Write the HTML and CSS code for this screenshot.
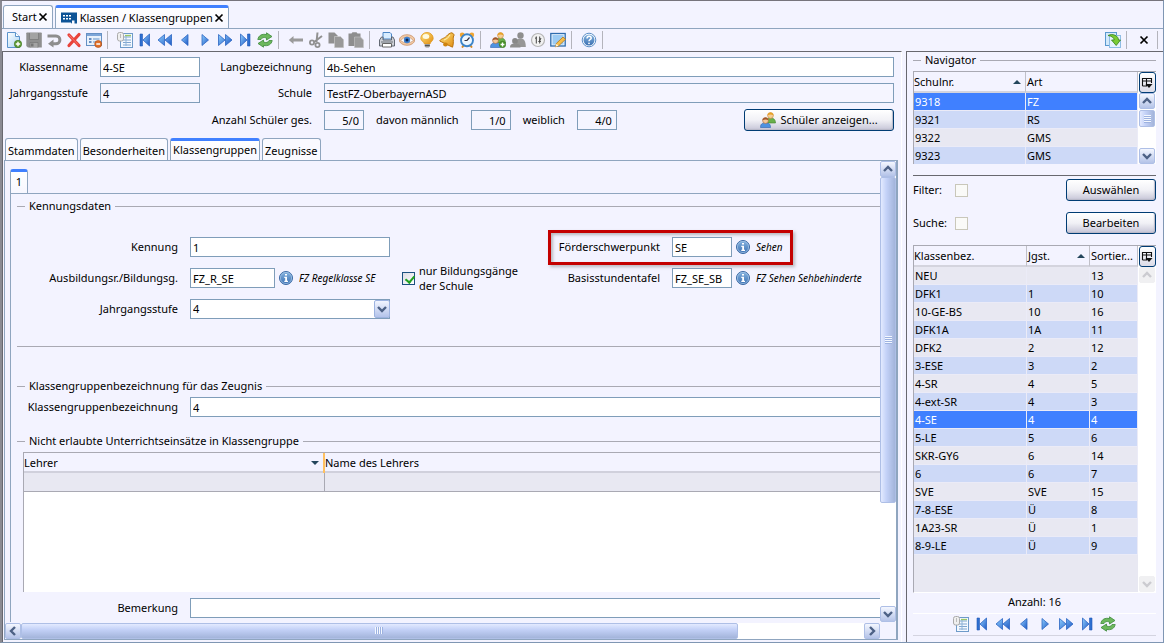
FILE: index.html
```html
<!DOCTYPE html>
<html lang="de">
<head>
<meta charset="utf-8">
<title>Klassen / Klassengruppen</title>
<link rel="stylesheet" href="styles.css">
</head>
<body>
<svg class="defs" aria-hidden="true">
  <defs>
    <linearGradient id="gBlue" x1="0" y1="0" x2="1" y2="1"><stop offset="0" stop-color="#8fd0ff"/><stop offset="1" stop-color="#1d57c4"/></linearGradient>
    <linearGradient id="gBall" x1="0" y1="0" x2="0" y2="1"><stop offset="0" stop-color="#86b4e0"/><stop offset="1" stop-color="#3b70b2"/></linearGradient>
    <linearGradient id="gPage" x1="0" y1="0" x2="1" y2="1"><stop offset="0" stop-color="#ffffff"/><stop offset="1" stop-color="#a9d3f5"/></linearGradient>
    <linearGradient id="gGold" x1="0" y1="0" x2="1" y2="1"><stop offset="0" stop-color="#ffe680"/><stop offset="1" stop-color="#e08a10"/></linearGradient>
  </defs>
  <symbol id="i-school" viewBox="0 0 16 12"><path d="M0 .5h16V11.500h-2.500V8.500H11v3q-1 0-1-1H0z" fill="#0d5396"/><path d="M2 3h2v1.500H2zM5 3h2v1.500H5zM8 3h2v1.500H8zM2 6h2v1.500H2zM5 6h2v1.500H5zM8 6h2v1.500H8z" fill="#fff"/></symbol>
  <symbol id="i-x" viewBox="0 0 10 10"><path d="M1.500 1.500l7 7M8.500 1.500l-7 7" stroke="#000" stroke-width="1.700" fill="none"/></symbol>
  <symbol id="i-new" viewBox="0 0 16 16"><path d="M1.500.5h8l4 4v11h-12z" fill="url(#gPage)" stroke="#5b93cc"/><path d="M9.500.5v4h4" fill="#fff" stroke="#5b93cc"/><circle cx="12" cy="12" r="3.700" fill="#5f9c35" stroke="#3d7320" stroke-width=".6"/><path d="M12 9.800v4.400M9.800 12h4.400" stroke="#fff" stroke-width="1.400"/></symbol>
  <symbol id="i-save" viewBox="0 0 16 16"><path d="M1 .5h14q.8 0 .8.8v14.200H2L.3 14V1.300Q.3.500 1 .5z" fill="#8f8f8f"/><path d="M3.500 1v6.500h9V1M4 15.500v-5h8v5" fill="#a3a3a3" stroke="#777" stroke-width=".7"/><path d="M5 11.500h2.500v3H5z" fill="#777"/></symbol>
  <symbol id="i-undo" viewBox="0 0 16 16"><path d="M1.500 4h8.500a3.900 3.900 0 010 7.800H6" fill="none" stroke="#8e8e8e" stroke-width="3"/><path d="M7.500 7.500v8L2 11.800z" fill="#8e8e8e"/></symbol>
  <symbol id="i-del" viewBox="0 0 16 16"><path d="M3 3l10 10.500M13 2.500L3 13.500" stroke="#e8433b" stroke-width="3.200" stroke-linecap="round"/><path d="M3 3l9 9.500" stroke="#ff8279" stroke-width=".8"/></symbol>
  <symbol id="i-form" viewBox="0 0 16 16"><rect x=".5" y="1.500" width="15" height="12" fill="#e8f1fb" stroke="#6590c4"/><path d="M1 2h14v2H1z" fill="#7da6d8"/><path d="M3 7h2.500M3 10h2.500" stroke="#3b6db0" stroke-width="1.300"/><path d="M7 7h6.500M7 10h4" stroke="#8fb2da" stroke-width="1.300"/><circle cx="12.200" cy="12" r="3.500" fill="#e0702b" stroke="#b0480c" stroke-width=".6"/><path d="M10.300 12h3.800" stroke="#fff" stroke-width="1.500"/></symbol>
  <symbol id="i-list" viewBox="0 0 16 16"><rect x="3.500" y="1.500" width="12" height="14" fill="#f4f9ff" stroke="#6e9bc9"/><path d="M6 5h8M6 8h8M6 10.500h8M6 13h8" stroke="#7fa5cf"/><path d="M9 3.500v10.500" stroke="#8eb4d8"/><path d="M8 3.500h6" stroke="#9bc766" stroke-width="1.300"/><rect x=".5" y=".5" width="6" height="8.500" rx="2" fill="#efefef" stroke="#aaa"/><path d="M3.500 2v4" stroke="#bbb"/></symbol>
  <symbol id="i-first" viewBox="0 0 16 16"><path d="M3 2h2.500v12H3z" fill="#2d6fd0" stroke="#2259b5" stroke-width=".6"/><path d="M12.500 2v12L6 8z" fill="url(#gBlue)" stroke="#2b64c2" stroke-width=".8"/></symbol>
  <symbol id="i-rew" viewBox="0 0 16 16"><path d="M7.500 2.500v11L1 8zM14.500 2.500v11L8 8z" fill="url(#gBlue)" stroke="#2b64c2" stroke-width=".8"/></symbol>
  <symbol id="i-prev" viewBox="0 0 16 16"><path d="M11 2.500v11L4.500 8z" fill="url(#gBlue)" stroke="#2b64c2" stroke-width=".8"/></symbol>
  <symbol id="i-next" viewBox="0 0 16 16"><path d="M5 2.500v11L11.500 8z" fill="url(#gBlue)" stroke="#2b64c2" stroke-width=".8"/></symbol>
  <symbol id="i-ff" viewBox="0 0 16 16"><path d="M1.500 2.500v11L8 8zM8.500 2.500v11L15 8z" fill="url(#gBlue)" stroke="#2b64c2" stroke-width=".8"/></symbol>
  <symbol id="i-last" viewBox="0 0 16 16"><path d="M3.500 2v12L10 8z" fill="url(#gBlue)" stroke="#2b64c2" stroke-width=".8"/><path d="M10.500 2H13v12h-2.500z" fill="#2d6fd0" stroke="#2259b5" stroke-width=".6"/></symbol>
  <symbol id="i-refresh" viewBox="0 0 16 16"><path d="M.8 7.500C1.500 3.500 5 1.500 9.500 2.600V.8L15 4.500 9.500 8V6C6.500 5 5 5.500 4 7.500z" fill="#6cb85c" stroke="#3f8a3c" stroke-width=".8"/><path d="M15.200 8.500C14.500 12.500 11 14.500 6.500 13.400v1.800L1 11.500 6.500 8v2c3 1 4.500.5 5.500-1.500z" fill="#6cb85c" stroke="#3f8a3c" stroke-width=".8"/></symbol>
  <symbol id="i-left" viewBox="0 0 16 16"><path d="M.8 8L5.500 4v2.600H15v2.800H5.500V12z" fill="#9a9a9a"/></symbol>
  <symbol id="i-cut" viewBox="0 0 16 16"><path d="M9.500.5L8.500 10M14 4L5.500 10.500" stroke="#919191" stroke-width="2"/><circle cx="4" cy="10.500" r="2.100" fill="none" stroke="#919191" stroke-width="1.800"/><circle cx="9.500" cy="13" r="2.100" fill="none" stroke="#919191" stroke-width="1.800"/></symbol>
  <symbol id="i-copy" viewBox="0 0 16 16"><path d="M.5.500h6l3 3v8h-9z" fill="#909090"/><path d="M6.500 4.500h6l3.200 3.200v8H6.500z" fill="#999" stroke="#d0d0d0" stroke-width=".6"/></symbol>
  <symbol id="i-paste" viewBox="0 0 16 16"><path d="M.5 1.500h3l1-1.300h4l1 1.300h3V14H.5z" fill="#8e8e8e"/><path d="M6.500 5h6l3 3v7.700h-9z" fill="#9c9c9c" stroke="#c8c8c8" stroke-width=".6"/></symbol>
  <symbol id="i-print" viewBox="0 0 16 16"><path d="M4 7V.5h7l1.500 1.500V7z" fill="#d8ecff" stroke="#4d86c6"/><path d="M2.500 5h1.500v3h8.500V5H14l1.500 3v6H.5V8z" fill="#cdd0d6" stroke="#555b66" stroke-width=".9"/><path d="M3.500 11.500h9v3.500h-9z" fill="#fff" stroke="#666"/><path d="M2 10h12" stroke="#6d727b"/></symbol>
  <symbol id="i-eye" viewBox="0 0 16 16"><ellipse cx="8" cy="8" rx="7.700" ry="5.300" fill="#f1c9a5" stroke="#c99066" stroke-width=".8"/><path d="M1.500 8.500Q8 1.500 14.500 8.500 8 13.500 1.500 8.500z" fill="#fff" stroke="#b98a6c" stroke-width=".6"/><circle cx="8" cy="8" r="3.200" fill="#3f81d0"/><circle cx="8" cy="8" r="1.500" fill="#0d2550"/></symbol>
  <symbol id="i-bulb" viewBox="0 0 16 16"><path d="M8 .5a6 6 0 016.200 5.700c0 2.600-2.700 3.500-3.200 5.800H5.500C5 9.700 1.800 8.800 1.800 6.200A6 6 0 018 .5z" fill="url(#gGold)" stroke="#e0981c" stroke-width=".8"/><ellipse cx="7" cy="4.500" rx="3.300" ry="2.500" fill="#fffbe0"/><path d="M5.800 12h5v2.500l-1 1H6.800l-1-1z" fill="#989898"/><path d="M5.800 13.500h5" stroke="#555"/></symbol>
  <symbol id="i-bell" viewBox="0 0 16 16"><path d="M13 .8l2.300 2C13 5.500 15.500 9 13.500 15.200L.8 9C1 7 5.500 6.500 7.500 4.200 9 2.300 11 .800 13 .8z" fill="url(#gGold)" stroke="#b9720c"/><ellipse cx="6.500" cy="12.500" rx="2.400" ry="1.900" fill="#cf830f"/><path d="M5 8Q9 7 11 3" stroke="#fff3b0" fill="none"/></symbol>
  <symbol id="i-clock" viewBox="0 0 16 16"><circle cx="3.200" cy="3" r="2.400" fill="#f1a532"/><circle cx="12.800" cy="3" r="2.400" fill="#f1a532"/><path d="M3 15.500l2-2.500M13 15.500l-2-2.500" stroke="#d98b20" stroke-width="2"/><circle cx="8" cy="8.300" r="6" fill="#eef7ff" stroke="#3d85c9" stroke-width="1.900"/><path d="M10.500 5.500L8 8.500H5.500" fill="none" stroke="#334" stroke-width="1.200"/></symbol>
  <symbol id="i-people" viewBox="0 0 16 16"><path d="M7 11c0-4 1-5 3.500-5S15.500 7 15.500 11z" fill="#69b04b" stroke="#3f7f2b" stroke-width=".6"/><circle cx="10.500" cy="3.500" r="2.900" fill="#f4cd97" stroke="#c48531" stroke-width=".6"/><path d="M7.500 3.500C7.500-.5 13.500-.5 13.500 3.500 12 2 9 2 7.500 3.500z" fill="#e8a126"/><path d="M.5 15.500C.5 12 2 11 5.500 11s5 1 5 4.500z" fill="#4d92e0" stroke="#2c62ad" stroke-width=".6"/><circle cx="5.500" cy="8.500" r="2.900" fill="#f3c89a" stroke="#a7673a" stroke-width=".6"/><path d="M2.500 8.500c0-4 6-4 6 0C7 7 4 7 2.500 8.500z" fill="#a1562a"/></symbol>
  <symbol id="i-peopleadd" viewBox="0 0 16 16"><use href="#i-people"/><circle cx="12.500" cy="12.500" r="3.200" fill="#4e9a2e" stroke="#37701f" stroke-width=".6"/><path d="M12.500 10.600v3.800M10.600 12.500h3.800" stroke="#fff" stroke-width="1.300"/></symbol>
  <symbol id="i-peoplegray" viewBox="0 0 16 16"><circle cx="10.500" cy="3.500" r="3.200" fill="#8e8e8e"/><path d="M6 12c0-4 1-5.500 4.500-5.500S15.800 9 15.800 15H7z" fill="#979797"/><circle cx="5" cy="9" r="2.900" fill="#888"/><path d="M0 15.500c0-3 1.500-4 5-4s5.500 1 5.500 4z" fill="#8e8e8e"/></symbol>
  <symbol id="i-sliders" viewBox="0 0 16 16"><circle cx="8" cy="8" r="6.500" fill="#f2f2f2" stroke="#b5b5b5" stroke-width="1.200"/><path d="M6.300 4.500v7M9.700 4.500v7M5 6.500l1.300-1M8.500 9.500h2.400M11 6L9 10" stroke="#444" stroke-width="1"/></symbol>
  <symbol id="i-edit" viewBox="0 0 16 16"><rect x=".8" y="1.500" width="14.400" height="12.500" fill="#e9f5ff" stroke="#2f6cae" stroke-width="1.300"/><path d="M2.500 3h11v9.500h-11z" fill="#9ccbf3"/><path d="M5.500 14.800l1-3.500L13 5l2.500 2.300-6.800 6.500z" fill="#f6bd4a" stroke="#b87816" stroke-width=".8"/><path d="M5.500 14.800l1-3 2 2z" fill="#fff3d6"/></symbol>
  <symbol id="i-help" viewBox="0 0 16 16"><circle cx="8" cy="8" r="6.800" fill="#fff" stroke="#5c8fc8" stroke-width="1"/><circle cx="8" cy="8" r="5.500" fill="url(#gBall)"/><path d="M6 6.500c0-3 4.200-2.600 4.200-.3C10.200 7.500 8 7.500 8 9.300" fill="none" stroke="#fff" stroke-width="1.500"/><circle cx="8" cy="11.300" r=".9" fill="#fff"/></symbol>
  <symbol id="i-info" viewBox="0 0 16 16"><circle cx="8" cy="8" r="6.500" fill="url(#gBall)" stroke="#3b6aa5"/><circle cx="8" cy="8" r="5.600" fill="none" stroke="#a9c8e8" stroke-width=".7"/><path d="M7 4h2v1.600H7zM6.300 6.800H9v4h1V12H6.300v-1.200h.9V8h-.9z" fill="#fff"/></symbol>
  <symbol id="i-export" viewBox="0 0 16 16"><rect x=".5" y=".5" width="11" height="13" fill="#d3e9fb" stroke="#5a98cf"/><rect x="4.500" y="3.500" width="11" height="12" fill="#e6f3fd" stroke="#8fbde5"/><path d="M3 3.500C8 1 13.500 4 13.500 8H15.500l-4.300 5.500L6.500 8h2.700C9 6 7 4 3 3.500z" fill="#7acb34" stroke="#35801b" stroke-width=".8"/></symbol>
  <symbol id="i-cols" viewBox="0 0 12 12"><path d="M1.500 9V1.500h9V6M1.500 4h9M5.500 1.500V9H1.500" fill="none" stroke="#111" stroke-width="1.100"/><path d="M4.500 7h7L8 11z" fill="#111"/></symbol>
  <symbol id="i-up" viewBox="0 0 10 8"><path d="M1 6l4-4 4 4" fill="none" stroke="currentColor" stroke-width="2.400"/></symbol>
  <symbol id="i-down" viewBox="0 0 10 8"><path d="M1 2l4 4 4-4" fill="none" stroke="currentColor" stroke-width="2.400"/></symbol>
  <symbol id="i-lt" viewBox="0 0 8 10"><path d="M6 1L2 5l4 4" fill="none" stroke="currentColor" stroke-width="2.400"/></symbol>
  <symbol id="i-gt" viewBox="0 0 8 10"><path d="M2 1l4 4-4 4" fill="none" stroke="currentColor" stroke-width="2.400"/></symbol>
</svg>

<div class="window">
  <div class="doc-tabs" role="tablist">
    <div class="doc-tab"><span>Start</span><button class="bare" aria-label="Start schließen"><svg class="ico-x"><use href="#i-x"/></svg></button></div>
    <div class="doc-tab doc-tab-active"><svg class="ico-school"><use href="#i-school"/></svg><span>Klassen / Klassengruppen</span><button class="bare" aria-label="Klassen schließen"><svg class="ico-x"><use href="#i-x"/></svg></button></div>
  </div>

  <div class="toolbar">
    <button class="tool" aria-label="Neu"><svg><use href="#i-new"/></svg></button>
    <button class="tool" aria-label="Speichern"><svg><use href="#i-save"/></svg></button>
    <button class="tool" aria-label="Rückgängig"><svg><use href="#i-undo"/></svg></button>
    <button class="tool" aria-label="Löschen"><svg><use href="#i-del"/></svg></button>
    <button class="tool" aria-label="Eintrag entfernen"><svg><use href="#i-form"/></svg></button>
    <span class="sep"></span>
    <button class="tool" aria-label="Liste"><svg><use href="#i-list"/></svg></button>
    <button class="tool" aria-label="Erster"><svg><use href="#i-first"/></svg></button>
    <button class="tool" aria-label="Zurückblättern"><svg><use href="#i-rew"/></svg></button>
    <button class="tool" aria-label="Voriger"><svg><use href="#i-prev"/></svg></button>
    <button class="tool" aria-label="Nächster"><svg><use href="#i-next"/></svg></button>
    <button class="tool" aria-label="Vorblättern"><svg><use href="#i-ff"/></svg></button>
    <button class="tool" aria-label="Letzter"><svg><use href="#i-last"/></svg></button>
    <button class="tool" aria-label="Aktualisieren"><svg><use href="#i-refresh"/></svg></button>
    <span class="sep"></span>
    <button class="tool" aria-label="Zurück"><svg><use href="#i-left"/></svg></button>
    <button class="tool" aria-label="Ausschneiden"><svg><use href="#i-cut"/></svg></button>
    <button class="tool" aria-label="Kopieren"><svg><use href="#i-copy"/></svg></button>
    <button class="tool" aria-label="Einfügen"><svg><use href="#i-paste"/></svg></button>
    <span class="sep"></span>
    <button class="tool" aria-label="Drucken"><svg><use href="#i-print"/></svg></button>
    <button class="tool" aria-label="Vorschau"><svg><use href="#i-eye"/></svg></button>
    <button class="tool" aria-label="Hinweise"><svg><use href="#i-bulb"/></svg></button>
    <button class="tool" aria-label="Meldungen"><svg><use href="#i-bell"/></svg></button>
    <button class="tool" aria-label="Wiedervorlage"><svg><use href="#i-clock"/></svg></button>
    <span class="sep"></span>
    <button class="tool" aria-label="Schüler hinzufügen"><svg><use href="#i-peopleadd"/></svg></button>
    <button class="tool" aria-label="Schüler"><svg><use href="#i-peoplegray"/></svg></button>
    <button class="tool" aria-label="Einstellungen"><svg><use href="#i-sliders"/></svg></button>
    <button class="tool" aria-label="Bearbeiten"><svg><use href="#i-edit"/></svg></button>
    <span class="sep"></span>
    <button class="tool" aria-label="Hilfe"><svg><use href="#i-help"/></svg></button>
    <span class="sep"></span>
    <span class="grow"></span>
    <button class="tool" aria-label="Ablösen"><svg><use href="#i-export"/></svg></button>
    <span class="sep"></span>
    <button class="tool" aria-label="Schließen"><svg class="ico-x"><use href="#i-x"/></svg></button>
    <span class="sep"></span>
  </div>

  <div class="main">
    <main class="editor">
      <div class="head-form">
        <label for="kname">Klassenname</label><input id="kname" value="4-SE">
        <label for="lang">Langbezeichnung</label><input id="lang" value="4b-Sehen">
        <label for="jg">Jahrgangsstufe</label><input id="jg" class="ro" value="4" readonly>
        <label for="schule">Schule</label><input id="schule" class="ro" value="TestFZ-OberbayernASD" readonly>
        <label class="count-label" for="ges">Anzahl Schüler ges.</label>
        <div class="counts">
          <input id="ges" class="ro num" value="5/0" readonly>
          <label for="mann">davon männlich</label><input id="mann" class="ro num" value="1/0" readonly>
          <label for="weib">weiblich</label><input id="weib" class="ro num" value="4/0" readonly>
          <span class="grow"></span>
          <button class="btn btn-wide"><svg class="ico"><use href="#i-people"/></svg>Schüler anzeigen...</button>
        </div>
      </div>

      <div class="tabs" role="tablist">
        <button class="tab" role="tab">Stammdaten</button>
        <button class="tab" role="tab">Besonderheiten</button>
        <button class="tab tab-active" role="tab" aria-selected="true">Klassengruppen</button>
        <button class="tab" role="tab">Zeugnisse</button>
      </div>

      <div class="scroller">
        <div class="viewport">
          <div class="canvas">
            <div class="subtabs" role="tablist"><button class="tab tab-active subtab" role="tab" aria-selected="true">1</button></div>
            <div class="subpage">
              <fieldset class="group group-closed">
                <legend>Kennungsdaten</legend>
                <div class="ident">
                  <label class="c1 r1" for="kenn">Kennung</label>
                  <input class="c2 r1" id="kenn" value="1">
                  <label class="c4 r1" for="fsp">Förderschwerpunkt</label>
                  <div class="coded c5 r1"><input id="fsp" class="code-short" value="SE"><svg class="ico"><use href="#i-info"/></svg><em>Sehen</em></div>
                  <span class="marker"></span>

                  <label class="c1 r2" for="ausb">Ausbildungsr./Bildungsg.</label>
                  <div class="coded c2 r2"><input id="ausb" class="code-long" value="FZ_R_SE"><svg class="ico"><use href="#i-info"/></svg><em>FZ Regelklasse SE</em></div>
                  <label class="check c3 r2"><input type="checkbox" checked><span>nur Bildungsgänge<br>der Schule</span></label>
                  <label class="c4 r2" for="basis">Basisstundentafel</label>
                  <div class="coded c5 r2"><input id="basis" class="code-short" value="FZ_SE_SB"><svg class="ico"><use href="#i-info"/></svg><em>FZ Sehen Sehbehinderte</em></div>

                  <label class="c1 r3" for="jgs">Jahrgangsstufe</label>
                  <div class="combo c2 r3"><select id="jgs"><option>4</option></select><span class="combo-btn"><svg class="chev"><use href="#i-down"/></svg></span></div>
                </div>
              </fieldset>

              <fieldset class="group">
                <legend>Klassengruppenbezeichnung für das Zeugnis</legend>
                <div class="line"><label for="kgb">Klassengruppenbezeichnung</label><input id="kgb" value="4"></div>
              </fieldset>

              <fieldset class="group">
                <legend>Nicht erlaubte Unterrichtseinsätze in Klassengruppe</legend>
                <div class="teachers">
                  <table>
                    <colgroup><col class="t-first"><col></colgroup>
                    <thead><tr><th><span class="th-sort">Lehrer<i class="tri tri-down"></i></span></th><th>Name des Lehrers</th></tr></thead>
                    <tbody><tr><td></td><td></td></tr></tbody>
                  </table>
                </div>
              </fieldset>
              <div class="line line-last"><label for="bem">Bemerkung</label><input id="bem"></div>
            </div>
          </div>
        </div>
        <div class="vbar">
          <button class="sb" aria-label="Nach oben"><svg class="chev"><use href="#i-up"/></svg></button>
          <div class="vtrack"><div class="vthumb"><i class="vgrip"></i></div></div>
          <button class="sb" aria-label="Nach unten"><svg class="chev"><use href="#i-down"/></svg></button>
        </div>
        <div class="hbar">
          <button class="sb" aria-label="Nach links"><svg class="chev-h"><use href="#i-lt"/></svg></button>
          <div class="htrack"><div class="hthumb"><i class="hgrip"></i></div></div>
          <button class="sb" aria-label="Nach rechts"><svg class="chev-h"><use href="#i-gt"/></svg></button>
        </div>
      </div>
    </main>

    <aside class="navigator">
      <fieldset class="nav-group">
        <legend>Navigator</legend>
        <div class="list list-schools">
          <div class="list-body">
            <table>
              <colgroup><col class="s1"><col></colgroup>
              <thead><tr><th><span class="th-sort">Schulnr.<i class="tri"></i></span></th><th>Art</th></tr></thead>
              <tbody>
                <tr class="sel"><td>9318</td><td>FZ</td></tr>
                <tr class="alt"><td>9321</td><td>RS</td></tr>
                <tr><td>9322</td><td>GMS</td></tr>
                <tr class="alt"><td>9323</td><td>GMS</td></tr>
              </tbody>
            </table>
          </div>
          <div class="list-side">
            <button class="cols" aria-label="Spalten"><svg class="ico-cols"><use href="#i-cols"/></svg></button>
            <button class="sb" aria-label="Nach oben"><svg class="chev"><use href="#i-up"/></svg></button>
            <div class="vtrack"><div class="vthumb vthumb-small"><i class="vgrip"></i></div></div>
            <button class="sb" aria-label="Nach unten"><svg class="chev"><use href="#i-down"/></svg></button>
          </div>
        </div>
      </fieldset>

      <div class="filters">
        <label for="filter">Filter:</label><input id="filter" type="checkbox" disabled><button class="btn">Auswählen</button>
        <label for="suche">Suche:</label><input id="suche" type="checkbox" disabled><button class="btn">Bearbeiten</button>
      </div>

      <div class="list list-classes">
        <div class="list-body">
          <table>
            <colgroup><col class="s1"><col class="s2"><col></colgroup>
            <thead><tr><th>Klassenbez.</th><th><span class="th-sort">Jgst.<i class="tri"></i></span></th><th>Sortier...</th></tr></thead>
            <tbody>
              <tr><td>NEU</td><td></td><td>13</td></tr>
              <tr class="alt"><td>DFK1</td><td>1</td><td>10</td></tr>
              <tr><td>10-GE-BS</td><td>10</td><td>16</td></tr>
              <tr class="alt"><td>DFK1A</td><td>1A</td><td>11</td></tr>
              <tr><td>DFK2</td><td>2</td><td>12</td></tr>
              <tr class="alt"><td>3-ESE</td><td>3</td><td>2</td></tr>
              <tr><td>4-SR</td><td>4</td><td>5</td></tr>
              <tr class="alt"><td>4-ext-SR</td><td>4</td><td>3</td></tr>
              <tr class="sel"><td>4-SE</td><td>4</td><td>4</td></tr>
              <tr class="alt"><td>5-LE</td><td>5</td><td>6</td></tr>
              <tr><td>SKR-GY6</td><td>6</td><td>14</td></tr>
              <tr class="alt"><td>6</td><td>6</td><td>7</td></tr>
              <tr><td>SVE</td><td>SVE</td><td>15</td></tr>
              <tr class="alt"><td>7-8-ESE</td><td>Ü</td><td>8</td></tr>
              <tr><td>1A23-SR</td><td>Ü</td><td>1</td></tr>
              <tr class="alt"><td>8-9-LE</td><td>Ü</td><td>9</td></tr>
            </tbody>
          </table>
        </div>
        <div class="list-side">
          <button class="cols" aria-label="Spalten"><svg class="ico-cols"><use href="#i-cols"/></svg></button>
          <button class="sb sb-off" aria-label="Nach oben" disabled><svg class="chev"><use href="#i-up"/></svg></button>
          <div class="vtrack"></div>
          <button class="sb sb-off" aria-label="Nach unten" disabled><svg class="chev"><use href="#i-down"/></svg></button>
        </div>
      </div>
      <div class="total">Anzahl: 16</div>
      <div class="pager">
        <button class="tool" aria-label="Liste"><svg><use href="#i-list"/></svg></button>
        <button class="tool" aria-label="Erster"><svg><use href="#i-first"/></svg></button>
        <button class="tool" aria-label="Zurückblättern"><svg><use href="#i-rew"/></svg></button>
        <button class="tool" aria-label="Voriger"><svg><use href="#i-prev"/></svg></button>
        <button class="tool" aria-label="Nächster"><svg><use href="#i-next"/></svg></button>
        <button class="tool" aria-label="Vorblättern"><svg><use href="#i-ff"/></svg></button>
        <button class="tool" aria-label="Letzter"><svg><use href="#i-last"/></svg></button>
        <button class="tool" aria-label="Aktualisieren"><svg><use href="#i-refresh"/></svg></button>
      </div>
    </aside>
  </div>
</div>
</body>
</html>
```
FILE: styles.css
```css
:root {
  --bg: #f3f3ff;
  --line: #8fa5bf;
  --dark: #68686f;
  --soft: #a9a9b3;
  --blue: #4080ff;
}
* { box-sizing: border-box; }
body {
  margin: 0;
  background: var(--bg);
  color: #000;
  font: 11px/16px "Noto Sans", "Open Sans", sans-serif;
}
button, input, select { font: inherit; color: inherit; margin: 0; }
button { padding: 0; }
svg { display: block; flex: none; }
.defs { position: absolute; width: 0; height: 0; }
.grow { flex: 1; }
.ico { width: 16px; height: 16px; }
.ico-x { width: 10px; height: 10px; }
.ico-school { width: 16px; height: 12px; }
.ico-cols { width: 12px; height: 12px; }
.chev { width: 10px; height: 8px; }
.chev-h { width: 8px; height: 10px; }

.window {
  height: 100vh;
  display: flex;
  flex-direction: column;
  border: 1px solid #7f96b3;
  border-top-color: #76747c;
  border-left: 2px solid #8a8a92;
}

/* document tabs */
.doc-tabs {
  display: flex;
  align-items: flex-end;
  gap: 2px;
  height: 28px;
  padding-left: 1px;
  border-bottom: 1px solid var(--line);
}
.doc-tab {
  display: flex;
  align-items: center;
  gap: 1px;
  height: 23px;
  padding: 0 4px 0 8px;
  border: 1px solid var(--line);
  border-bottom: 0;
  border-radius: 3px 3px 0 0;
  background: linear-gradient(#fff, #f7f7ff);
}
.doc-tab-active { border-top: 3px solid var(--blue); padding-left: 5px; }
.doc-tab-active span { padding-left: 2px; }
.bare { border: 0; background: none; }

/* toolbar */
.toolbar { display: flex; align-items: center; height: 22px; padding-left: 2px; }
.tool {
  display: flex;
  align-items: center;
  justify-content: center;
  width: 20px;
  height: 20px;
  border: 0;
  background: none;
}
.tool svg { width: 16px; height: 16px; }
.tool .ico-x { width: 10px; height: 10px; }
.sep { width: 1px; height: 18px; margin: 0 7px 0 3px; background: #b4b4bc; }
.sep:last-child { margin-right: 5px; }

/* body split */
.main { flex: 1; min-height: 0; display: flex; gap: 4px; }
.editor {
  flex: 1;
  min-width: 0;
  display: flex;
  flex-direction: column;
  border-top: 1px solid var(--dark);
  border-left: 1px solid var(--dark);
  border-right: 1px solid #fff;
  padding: 5px 3px 2px 1px;
}

input, select {
  height: 20px;
  min-width: 0;
  padding: 0 2px;
  border: 1px solid #7f9db9;
  border-radius: 0;
  background: #fff;
  outline: 0;
}
.ro { background: #f5f5ff; }
.num { width: 40px; padding-right: 4px; text-align: right; }
label { white-space: nowrap; }

.head-form {
  display: grid;
  grid-template-columns: 84px 100px 100px minmax(0, 1fr);
  gap: 6px 12px;
  padding-right: 4px;
  align-items: center;
}
.head-form > label { text-align: right; }
.count-label { grid-column: 1 / 4; }
.counts { display: flex; align-items: center; gap: 12px; }

.btn {
  display: flex;
  align-items: center;
  justify-content: center;
  gap: 4px;
  height: 22px;
  border: 1px solid #003c74;
  border-radius: 3px;
  background: linear-gradient(#fff, #f1f1f6 50%, #c6c5d7);
  box-shadow: inset -1px -1px 1px #b9b9c8;
}
.btn-wide { width: 150px; }

/* page tabs */
.tabs { display: flex; gap: 2px; margin-top: 7px; padding-left: 1px; }
.tab {
  height: 22px;
  padding: 3px 2px 0;
  border: 1px solid var(--line);
  border-bottom: 0;
  border-radius: 3px 3px 0 0;
  background: #fafaff;
}
.tab-active {
  padding: 0 2px 1px;
  border-top: 3px solid var(--blue);
  background: linear-gradient(#fff, #f7f7ff);
}

/* scroll pane */
.scroller {
  flex: 1;
  min-height: 0;
  display: grid;
  grid-template-columns: minmax(0, 1fr) 16px;
  grid-template-rows: minmax(0, 1fr) 17px;
  border: 1px solid var(--line);
  border-right-width: 2px;
}
.viewport { overflow: hidden; }
.canvas { width: 125%; padding: 8px 0 0 5px; }
.subtabs { display: flex; border-bottom: 1px solid var(--line); }
.subtab { width: 18px; height: 24px; padding: 0 0 1px; }
.subpage { padding: 4px 6px 8px; border-left: 1px solid var(--line); }

.group { min-width: 0; margin: 0; padding: 0; border: 0 solid var(--soft); border-top-width: 1px; }
.group legend { margin-left: 8px; padding: 0 4px; }
.group-closed { border-bottom-width: 1px; margin-bottom: 31px; padding: 23px 0 27px; }

.ident {
  display: grid;
  grid-template-columns: 161px 200px 118px 128px minmax(0, 1fr);
  gap: 11px 12px;
  align-items: center;
}
.ident > label { text-align: right; }
.c1 { grid-column: 1; }
.c2 { grid-column: 2; }
.c3 { grid-column: 3; }
.c4 { grid-column: 4; }
.c5 { grid-column: 5; }
.r1 { grid-row: 1; }
.r2 { grid-row: 2; }
.r3 { grid-row: 3; }
.coded { display: flex; align-items: center; gap: 3px; height: 20px; white-space: nowrap; }
.coded em { font-size: 10px; padding-left: 2px; }
.code-long { width: 85px; }
.code-short { width: 60px; }
.marker {
  grid-column: 4 / 6;
  grid-row: 1;
  width: 245px;
  height: 35px;
  margin: -8px 0 -8px 16px;
  border: 3px solid #c40000;
  box-shadow: 2px 2px 3px #8888, inset 2px 2px 3px #8888;
  pointer-events: none;
}
.ident > .check {
  display: flex;
  align-items: center;
  gap: 4px;
  height: 20px;
  line-height: 15px;
  text-align: left;
}
input[type="checkbox"] {
  appearance: none;
  flex: none;
  width: 13px;
  height: 13px;
  padding: 0;
  border: 1px solid #1c5180;
  background: linear-gradient(135deg, #dcdce4, #fff);
}
input[type="checkbox"]:checked::after {
  content: "";
  display: block;
  width: 4px;
  height: 7px;
  margin: 1px 0 0 4px;
  border: solid #21a121;
  border-width: 0 2px 2px 0;
  transform: rotate(40deg);
}
input[type="checkbox"]:disabled { border-color: #c9c7ba; background: #fafaf8; }

.combo { display: grid; }
.combo > * { grid-area: 1 / 1; }
.combo select { appearance: none; }
.combo-btn {
  justify-self: end;
  display: flex;
  align-items: center;
  justify-content: center;
  width: 16px;
  margin: 1px 0;
  border: 1px solid #9db3e0;
  border-radius: 2px;
  background: linear-gradient(#f2f5ff, #b3c3ea);
  color: #4d6185;
  pointer-events: none;
}

.line { display: grid; grid-template-columns: 161px minmax(0, 1fr); gap: 12px; align-items: center; }
.line label { text-align: right; }
.group .line { padding: 3px 0 16px; }
.line-last { padding-top: 6px; }

/* tables */
table { width: 100%; border-collapse: collapse; table-layout: fixed; }
th {
  height: 20px;
  padding: 0;
  text-align: left;
  font-weight: 400;
  white-space: nowrap;
}
td { height: 18px; padding: 0 0 0 1px; line-height: 16px; }
.th-sort { display: flex; align-items: center; justify-content: space-between; padding-right: 4px; }
.tri { border: solid transparent; border-width: 0 4px 4px; border-bottom-color: #24465c; }
.tri-down { border-width: 4px 4px 0; border-top-color: #24465c; }

.teachers {
  height: 140px;
  margin: 3px 0 0 6px;
  border-top: 1px solid var(--soft);
  border-left: 1px solid var(--soft);
  background: #fff;
}
.t-first { width: 300px; }
.teachers thead { background: var(--bg); box-shadow: inset 0 -2px #d0d0dc; }
.teachers th:first-child { border-right: 2px solid #ffc060; }
.teachers td { background: #e8e8f2; border-bottom: 1px solid var(--soft); border-right: 1px solid var(--soft); }

/* scroll bars */
.sb {
  flex: none;
  display: flex;
  align-items: center;
  justify-content: center;
  width: 16px;
  height: 16px;
  border: 1px solid #aebfe6;
  border-radius: 2px;
  background: linear-gradient(#f4f7ff, #b4c3e8);
  color: #4d6185;
}
.sb-off { border-color: #f0f0f2; background: #f0f0f2; color: #cbcbd0; }
.vbar { display: flex; flex-direction: column; align-items: center; background: #fff; }
.vtrack { flex: 1; align-self: stretch; background: #fff; }
.vthumb {
  display: flex;
  align-items: center;
  justify-content: center;
  height: 76%;
  border: 1px solid #aebfe6;
  border-radius: 2px;
  background: linear-gradient(90deg, #e3eaff, #c3d1f7 40%, #a3b4da);
}
.vthumb-small { height: 17px; margin: 1px; }
.vgrip { width: 7px; height: 8px; background: repeating-linear-gradient(#f4f8ff 0 1px, #9db2e0 1px 2px); }
.hbar { display: flex; align-items: center; }
.htrack { flex: 1; height: 16px; background: #fff; }
.hthumb {
  display: flex;
  align-items: center;
  justify-content: center;
  width: 85%;
  height: 16px;
  border: 1px solid #aebfe6;
  border-radius: 2px;
  background: linear-gradient(#e3eaff, #c3d1f7 40%, #a3b4da);
}
.hgrip { width: 8px; height: 7px; background: repeating-linear-gradient(90deg, #f4f8ff 0 1px, #9db2e0 1px 2px); }

/* navigator */
.navigator {
  flex: 0 0 257px;
  display: flex;
  flex-direction: column;
  padding: 0 7px 6px 6px;
  border-top: 1px solid var(--dark);
  border-left: 1px solid var(--dark);
}
.nav-group { min-width: 0; margin: 0; padding: 3px 0 11px; border: 0 solid var(--soft); border-width: 1px 0 0; }
.nav-group legend { margin-left: 8px; padding: 0 4px; }
.list { display: flex; border-top: 1px solid var(--soft); border-left: 1px solid var(--soft); }
.list-schools { height: 93px; }
.list-classes { flex: 1; min-height: 0; border-bottom: 1px solid #fff; }
.list-body { flex: 1; min-width: 0; overflow: hidden; background: #e8e8f2; }
.list-body table { border-collapse: separate; border-spacing: 0; }
.list thead { background: var(--bg); }
.list th { border-bottom: 2px solid #d4d4de; border-right: 1px solid #c0c0c8; height: 21px; }
.list th + th { padding-left: 1px; }
.list td { border-bottom: 1px solid #ebebf7; border-right: 1px solid #ebebf7; }
.alt td { background: #cdd9f7; }
.sel td { background: var(--blue); color: #fff; }
.s1 { width: 113px; }
.list-schools .s1 { width: 112px; }
.s2 { width: 63px; }
.list-side { display: flex; flex-direction: column; align-items: center; width: 18px; background: #fff; }
.cols {
  display: flex;
  align-items: center;
  justify-content: center;
  width: 17px;
  height: 21px;
  border: 1px solid #003c74;
  border-radius: 3px;
  background: linear-gradient(#fff, #dcdce8);
}

.filters {
  display: grid;
  grid-template-columns: 30px 1fr 90px;
  gap: 11px 12px;
  align-items: center;
  padding: 3px 0 11px;
  border-top: 1px solid var(--dark);
}
.total { padding: 1px 0 3px; text-align: center; }
.pager {
  display: flex;
  justify-content: center;
  gap: 1px;
  padding: 0 0 1px;
  border-top: 1px solid #fff;
  border-bottom: 1px solid #d4d4e0;
}
```
